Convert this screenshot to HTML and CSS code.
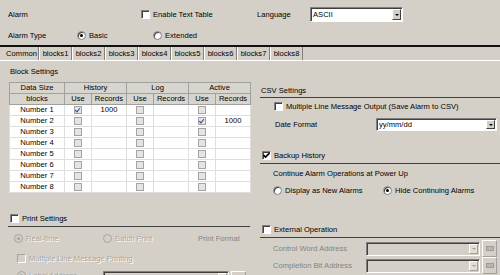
FILE: index.html
```html
<!DOCTYPE html>
<html lang="en">

<head>
    <meta charset="UTF-8">
    <meta name="viewport" content="width=device-width, initial-scale=1.0">
    <title>Alarm Settings</title>
    <link rel="stylesheet" href="styles.css">
</head>

<body>
    <div class="top">
        <div class="row row-alarm">
            <span class="w-alarm">Alarm</span>
            <label class="item w-enable"><span class="chk"></span>Enable Text Table</label>
            <span class="w-lang">Language</span>
            <div class="select sel-lang"><span class="sel-val">ASCII</span><span class="sel-btn"></span></div>
        </div>
        <div class="row row-type">
            <span class="w-type">Alarm Type</span>
            <label class="item w-basic"><span class="radio on"></span>Basic</label>
            <label class="item"><span class="radio"></span>Extended</label>
        </div>
    </div>

    <div class="tabs">
        <div class="tab active">Common</div>
        <div class="tab">blocks1</div>
        <div class="tab">blocks2</div>
        <div class="tab">blocks3</div>
        <div class="tab">blocks4</div>
        <div class="tab">blocks5</div>
        <div class="tab">blocks6</div>
        <div class="tab">blocks7</div>
        <div class="tab">blocks8</div>
    </div>

    <div class="content">
        <div class="col-left">
            <div class="block-title">Block Settings</div>
            <table class="blocks">
                <colgroup>
                    <col style="width: 55px">
                    <col style="width: 27px"><col style="width: 35px">
                    <col style="width: 27px"><col style="width: 35px">
                    <col style="width: 27px"><col style="width: 35px">
                </colgroup>
                <tr class="hd">
                    <th>Data Size</th><th colspan="2">History</th><th colspan="2">Log</th><th colspan="2">Active</th>
                </tr>
                <tr class="hd">
                    <th>blocks</th><th>Use</th><th>Records</th><th>Use</th><th>Records</th><th>Use</th><th>Records</th>
                </tr>
                <tr><td>Number 1</td><td><span class="tchk on"></span></td><td>1000</td><td><span class="tchk"></span></td><td></td><td><span class="tchk"></span></td><td></td></tr>
                <tr><td>Number 2</td><td><span class="tchk"></span></td><td></td><td><span class="tchk"></span></td><td></td><td><span class="tchk on"></span></td><td>1000</td></tr>
                <tr><td>Number 3</td><td><span class="tchk"></span></td><td></td><td><span class="tchk"></span></td><td></td><td><span class="tchk"></span></td><td></td></tr>
                <tr><td>Number 4</td><td><span class="tchk"></span></td><td></td><td><span class="tchk"></span></td><td></td><td><span class="tchk"></span></td><td></td></tr>
                <tr><td>Number 5</td><td><span class="tchk"></span></td><td></td><td><span class="tchk"></span></td><td></td><td><span class="tchk"></span></td><td></td></tr>
                <tr><td>Number 6</td><td><span class="tchk"></span></td><td></td><td><span class="tchk"></span></td><td></td><td><span class="tchk"></span></td><td></td></tr>
                <tr><td>Number 7</td><td><span class="tchk"></span></td><td></td><td><span class="tchk"></span></td><td></td><td><span class="tchk"></span></td><td></td></tr>
                <tr><td>Number 8</td><td><span class="tchk"></span></td><td></td><td><span class="tchk"></span></td><td></td><td><span class="tchk"></span></td><td></td></tr>
            </table>

            <div class="group-head print-head">
                <label class="item"><span class="chk"></span>Print Settings</label>
            </div>
            <div class="row print-mode">
                <label class="item off w-realtime"><span class="radio on dis"></span>Real-time</label>
                <label class="item off w-batch"><span class="radio dis"></span>Batch Print</label>
                <span class="muted">Print Format</span>
            </div>
            <div class="row print-multi">
                <label class="item off"><span class="chk dis"></span>Multiple Line Message Printing</label>
            </div>
            <div class="row print-addr">
                <label class="item off w-addr"><span class="radio on dis"></span>Label Address</label>
                <div class="combo combo-print"><span class="combo-btn"></span></div>
                <span class="pick"><span class="pick-icon"></span></span>
            </div>
        </div>

        <div class="col-right">
            <div class="group-head csv-head">CSV Settings</div>
            <div class="row csv-multi">
                <label class="item"><span class="chk"></span>Multiple Line Message Output (Save Alarm to CSV)</label>
            </div>
            <div class="row csv-date">
                <span class="w-date">Date Format</span>
                <div class="select sel-date"><span class="sel-val">yy/mm/dd</span><span class="sel-btn"></span></div>
            </div>

            <div class="group-head backup-head">
                <label class="item"><span class="chk on">
                    <svg width="7" height="7" viewBox="0 0 7 7"><path d="M0.5 3 L2.5 5 L6.5 1" fill="none" stroke="#000" stroke-width="1.6"/></svg>
                </span>Backup History</label>
            </div>
            <div class="row backup-text">Continue Alarm Operations at Power Up</div>
            <div class="row backup-mode">
                <label class="item w-newalarm"><span class="radio"></span>Display as New Alarms</label>
                <label class="item"><span class="radio on"></span>Hide Continuing Alarms</label>
            </div>

            <div class="group-head ext-head">
                <label class="item"><span class="chk"></span>External Operation</label>
            </div>
            <div class="ext-rows">
                <div class="row ext-row">
                    <span class="w-ext muted">Control Word Address</span>
                    <div class="combo"><span class="combo-btn"></span></div>
                    <span class="pick"><span class="pick-icon"></span></span>
                </div>
                <div class="row ext-row">
                    <span class="w-ext muted">Completion Bit Address</span>
                    <div class="combo"><span class="combo-btn"></span></div>
                    <span class="pick"><span class="pick-icon"></span></span>
                </div>
            </div>
        </div>
    </div>
</body>

</html>
```

FILE: styles.css
```css
body {
    margin: 0;
    width: 500px;
    height: 275px;
    overflow: hidden;
    background: #d4d0c8;
    font-family: "Liberation Sans", Arial, sans-serif;
    font-size: 7.6px;
    color: #000;
}

.row {
    display: flex;
    align-items: center;
}

.item {
    display: flex;
    align-items: center;
    white-space: nowrap;
}

/* top area */
.top {
    padding-left: 8px;
}

.row-alarm {
    height: 15px;
    padding-top: 7px;
}

.row-type {
    height: 14px;
    margin-top: 6px;
}

.w-alarm { width: 133px; }
.w-enable { width: 116px; }
.w-lang { width: 53px; }
.w-type { width: 69px; }
.w-basic { width: 76px; }

/* checkbox / radio */
.chk {
    box-sizing: border-box;
    width: 9px;
    height: 9px;
    margin-right: 3px;
    background: #fff;
    border: 1px solid;
    border-color: #808080 #fff #fff #808080;
    box-shadow: inset 1px 1px 0 #404040;
    display: flex;
    align-items: center;
    justify-content: center;
    flex-shrink: 0;
}

.chk svg {
    display: block;
}

.chk.dis {
    background: #d4d0c8;
    border-color: #a8a49c #fff #fff #a8a49c;
    box-shadow: none;
}

.radio {
    box-sizing: border-box;
    width: 9px;
    height: 9px;
    margin-right: 3px;
    border-radius: 50%;
    background: #fff;
    border: 1px solid #808080;
    box-shadow: inset 1px 1px 0 #404040;
    display: flex;
    align-items: center;
    justify-content: center;
    flex-shrink: 0;
}

.radio.on::after {
    content: "";
    width: 3px;
    height: 3px;
    border-radius: 50%;
    background: #000;
}

.radio.dis {
    background: #d4d0c8;
    border-color: #a8a49c;
    box-shadow: none;
}

.radio.dis.on::after {
    background: #a8a49c;
}

.off {
    color: #aaa69e;
    text-shadow: 1px 1px 0 #fff;
}

.muted {
    color: #85837f;
}

/* select boxes */
.select {
    box-sizing: border-box;
    display: flex;
    align-items: center;
    background: #fff;
    border: 1px solid;
    border-color: #808080 #fff #fff #808080;
    box-shadow: inset 1px 1px 0 #404040;
    padding: 1px 1px 1px 2px;
}

.sel-val {
    flex: 1;
}

.sel-btn {
    box-sizing: border-box;
    width: 9px;
    height: 100%;
    background: #d4d0c8;
    border: 1px solid;
    border-color: #fff #404040 #404040 #fff;
    display: flex;
    align-items: center;
    justify-content: center;
}

.sel-btn::after {
    content: "";
    border-left: 2px solid transparent;
    border-right: 2px solid transparent;
    border-top: 2px solid #000;
}

.sel-lang {
    width: 93px;
    height: 15px;
}

.sel-date {
    width: 121px;
    height: 13px;
}

/* tabs */
.tabs {
    display: flex;
    margin-top: 3px;
    border-top: 2px solid #111;
    height: 13px;
    border-bottom: 1px solid #fff;
    padding-left: 5px;
}

.tab {
    width: 31px;
    text-align: center;
    line-height: 13px;
    border-left: 1px solid #fff;
    border-right: 1px solid #808080;
}

.tab.active {
    width: 33px;
    border-left: none;
}

/* two columns */
.content {
    display: grid;
    grid-template-columns: 252px 1fr;
}

.block-title {
    height: 12px;
    line-height: 12px;
    margin-top: 5px;
    padding-left: 10px;
}

.blocks {
    margin: 4px 0 0 9px;
    width: 241px;
    table-layout: fixed;
    border-collapse: collapse;
    border: 1px solid #a0a0a0;
}

.blocks tr {
    height: 11px;
}

.blocks th,
.blocks td {
    padding: 0;
    height: 10px;
    line-height: 10px;
    text-align: center;
    font-weight: normal;
    white-space: nowrap;
    overflow: hidden;
}

.blocks th {
    background: #d8d5ce;
    border: 1px solid #a0a0a0;
}

.blocks td {
    background: #fff;
    border: 1px solid #dedede;
}

.tchk {
    display: inline-block;
    box-sizing: border-box;
    width: 8px;
    height: 8px;
    vertical-align: middle;
    background: #e4e4e4;
    border: 1px solid #a4a4a4;
    position: relative;
}

.tchk.on::after {
    content: "";
    position: absolute;
    left: 1px;
    top: 0;
    width: 2px;
    height: 4px;
    border-right: 1px solid #2c4a98;
    border-bottom: 1px solid #2c4a98;
    transform: rotate(40deg);
}

/* group headers with line */
.group-head {
    display: flex;
    align-items: center;
    height: 16px;
    border-bottom: 1px solid #404040;
}

.print-head {
    margin: 17px 2px 0 8px;
    padding-left: 2px;
}

.print-mode {
    height: 18px;
    margin-top: 2px;
    padding-left: 14px;
}

.w-realtime { width: 89px; }
.w-batch { width: 95px; }

.print-multi {
    height: 18px;
    margin-top: 2px;
    padding-left: 17px;
}

.print-addr {
    height: 16px;
    margin-top: 4px;
    padding-left: 17px;
    align-items: flex-start;
}

.w-addr { width: 86px; }

.csv-head {
    margin: 23px 0 0 8px;
    height: 13px;
    padding-left: 1px;
}

.csv-multi {
    height: 16px;
    padding-left: 22px;
}

.csv-date {
    height: 21px;
    padding-left: 23px;
}

.w-date { width: 101px; }

.backup-head {
    margin: 12px 0 0 8px;
    padding-left: 2px;
}

.backup-text {
    height: 18px;
    padding-left: 21px;
}

.backup-mode {
    height: 16px;
    padding-left: 21px;
}

.w-newalarm { width: 110px; }

.ext-head {
    margin: 23px 0 0 8px;
    padding-left: 2px;
}

.ext-rows {
    margin-top: 2px;
}

.ext-row {
    height: 17px;
    padding-left: 21px;
}

.w-ext { width: 93px; }

/* disabled combo + picker button */
.combo {
    box-sizing: border-box;
    width: 114px;
    height: 14px;
    display: flex;
    justify-content: flex-end;
    align-items: center;
    padding: 1px;
    border: 1px solid;
    border-color: #808080 #fff #fff #808080;
    box-shadow: inset 1px 1px 0 #404040;
    background: #d4d0c8;
}

.combo-print {
    width: 126px;
}

.combo-btn {
    box-sizing: border-box;
    width: 9px;
    height: 100%;
    background: #e2dfd9;
    border: 1px solid;
    border-color: #fff #a0a0a0 #a0a0a0 #fff;
    display: flex;
    align-items: center;
    justify-content: center;
}

.combo-btn::after {
    content: "";
    border-left: 2px solid transparent;
    border-right: 2px solid transparent;
    border-top: 2px solid #a0a0a0;
}

.pick {
    box-sizing: border-box;
    width: 15px;
    height: 17px;
    margin-left: 2px;
    border: 1px solid;
    border-color: #fff #a0a0a0 #a0a0a0 #fff;
    display: flex;
    align-items: center;
    justify-content: center;
}

.pick-icon {
    width: 8px;
    height: 5px;
    background: #b8b5ae;
    border: 1px solid #a09d96;
    box-sizing: border-box;
}
```
